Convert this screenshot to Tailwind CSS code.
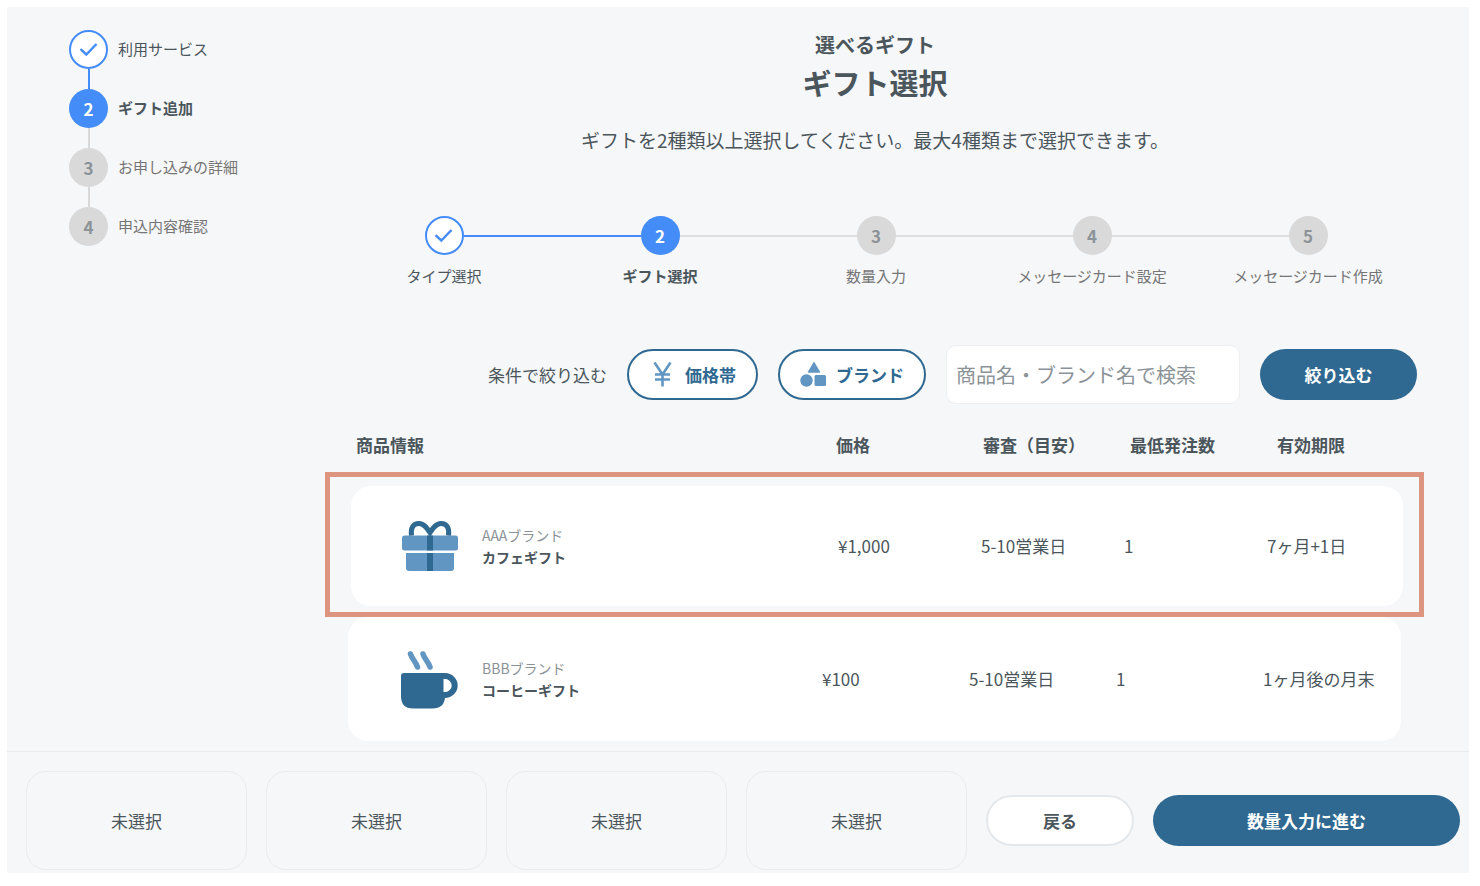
<!DOCTYPE html>
<html lang="ja">
<head>
    <meta charset="UTF-8">
    <meta name="viewport" content="width=device-width, initial-scale=1.0">
    <title>ギフト選択</title>
    <script src="https://cdn.jsdelivr.net/npm/@tailwindcss/browser@4"></script>
</head>
<body class="bg-white pt-[7px] pl-[7px] pr-[11px] pb-[13px] font-['Noto_Sans_CJK_JP',sans-serif] text-[#4b565c]">
    <div class="bg-[#f6f7f9]">
        <div class="flex">
            <!-- Application steps -->
            <nav class="w-[274px] shrink-0 pl-[62px] pt-[23px] text-[15px]">
                <ol>
                    <li>
                        <div class="flex items-center gap-[10px]">
                            <span class="size-[39px] rounded-full border-2 border-[#448cf7] bg-white flex items-center justify-center">
                                <svg class="w-5 h-5" viewBox="0 0 20 20" fill="none" stroke="#448cf7" stroke-width="2.4"><path d="M1.500 9.200 7.300 14.500 17.500 4"/></svg>
                            </span>
                            <span>利用サービス</span>
                        </div>
                        <div class="w-[2px] h-5 ml-[19px] bg-[#448cf7]"></div>
                    </li>
                    <li>
                        <div class="flex items-center gap-[10px]">
                            <span class="size-[39px] rounded-full bg-[#448cf7] text-white text-[17px] font-bold flex items-center justify-center">2</span>
                            <span class="font-bold">ギフト追加</span>
                        </div>
                        <div class="w-[2px] h-5 ml-[19px] bg-[#d9d9d9]"></div>
                    </li>
                    <li>
                        <div class="flex items-center gap-[10px]">
                            <span class="size-[39px] rounded-full bg-[#d9d9d9] text-[#8b9398] text-[17px] font-bold flex items-center justify-center">3</span>
                            <span class="text-[#757575]">お申し込みの詳細</span>
                        </div>
                        <div class="w-[2px] h-5 ml-[19px] bg-[#d9d9d9]"></div>
                    </li>
                    <li class="flex items-center gap-[10px]">
                        <span class="size-[39px] rounded-full bg-[#d9d9d9] text-[#8b9398] text-[17px] font-bold flex items-center justify-center">4</span>
                        <span class="text-[#757575]">申込内容確認</span>
                    </li>
                </ol>
            </nav>

            <main class="flex-1 pt-[22px]">
                <div class="text-center">
                    <p class="text-xl leading-8 font-bold">選べるギフト</p>
                    <h1 class="text-[29px] leading-[42px] font-bold">ギフト選択</h1>
                    <p class="mt-[21px] text-[19px] leading-8">ギフトを2種類以上選択してください。最大4種類まで選択できます。</p>
                </div>

                <!-- Gift steps -->
                <ol class="mt-[60px] pl-[55px] pr-[53px] flex text-[15px] text-[#757575]">
                    <li class="flex-1">
                        <div class="flex items-center">
                            <div class="flex-1"></div>
                            <span class="size-[39px] rounded-full border-2 border-[#448cf7] bg-white flex items-center justify-center">
                                <svg class="w-5 h-5" viewBox="0 0 20 20" fill="none" stroke="#448cf7" stroke-width="2.4"><path d="M1.500 9.200 7.300 14.500 17.500 4"/></svg>
                            </span>
                            <div class="flex-1 h-[2px] bg-[#448cf7]"></div>
                        </div>
                        <p class="mt-[9px] leading-6 text-center text-[#4b565c]">タイプ選択</p>
                    </li>
                    <li class="flex-1">
                        <div class="flex items-center">
                            <div class="flex-1 h-[2px] bg-[#448cf7]"></div>
                            <span class="size-[39px] rounded-full bg-[#448cf7] text-white text-[17px] font-bold flex items-center justify-center">2</span>
                            <div class="flex-1 h-[2px] bg-[#dddfe0]"></div>
                        </div>
                        <p class="mt-[9px] leading-6 text-center font-bold text-[#4b565c]">ギフト選択</p>
                    </li>
                    <li class="flex-1">
                        <div class="flex items-center">
                            <div class="flex-1 h-[2px] bg-[#dddfe0]"></div>
                            <span class="size-[39px] rounded-full bg-[#d9d9d9] text-[#8b9398] text-[17px] font-bold flex items-center justify-center">3</span>
                            <div class="flex-1 h-[2px] bg-[#dddfe0]"></div>
                        </div>
                        <p class="mt-[9px] leading-6 text-center">数量入力</p>
                    </li>
                    <li class="flex-1">
                        <div class="flex items-center">
                            <div class="flex-1 h-[2px] bg-[#dddfe0]"></div>
                            <span class="size-[39px] rounded-full bg-[#d9d9d9] text-[#8b9398] text-[17px] font-bold flex items-center justify-center">4</span>
                            <div class="flex-1 h-[2px] bg-[#dddfe0]"></div>
                        </div>
                        <p class="mt-[9px] leading-6 text-center">メッセージカード設定</p>
                    </li>
                    <li class="flex-1">
                        <div class="flex items-center">
                            <div class="flex-1 h-[2px] bg-[#dddfe0]"></div>
                            <span class="size-[39px] rounded-full bg-[#d9d9d9] text-[#8b9398] text-[17px] font-bold flex items-center justify-center">5</span>
                            <div class="flex-1"></div>
                        </div>
                        <p class="mt-[9px] leading-6 text-center">メッセージカード作成</p>
                    </li>
                </ol>

                <!-- Filters -->
                <form class="mt-[57px] pr-[52px] flex items-center justify-end gap-5 text-[17px]">
                    <span>条件で絞り込む</span>
                    <button type="button" class="h-[51px] pl-[22px] pr-5 flex items-center gap-[10px] rounded-full border-2 border-[#2f6991] bg-white font-bold text-[#2f6991]">
                        <svg class="w-6 h-7" viewBox="0 0 24 28" fill="none" stroke="#6296c2" stroke-width="2.6"><path d="M3.500 1.500 11.500 13.500 19.500 1.500M11.500 13V25.500M4 13.500H19M4 18.500H19"/></svg>
                        価格帯
                    </button>
                    <button type="button" class="h-[51px] px-5 flex items-center gap-[10px] rounded-full border-2 border-[#2f6991] bg-white font-bold text-[#2f6991]">
                        <svg class="w-[26px] h-7" viewBox="0 0 26 28" fill="#6296c2"><path d="M14 .5 20 10.500Q20.500 11.700 19.200 11.700H8.800Q7.500 11.700 8 10.500Z"/><circle cx="6.500" cy="19.500" r="6.200"/><rect x="14.500" y="14" width="11.500" height="11" rx="1.500"/></svg>
                        ブランド
                    </button>
                    <input type="search" aria-label="商品名・ブランド名で検索" placeholder="商品名・ブランド名で検索" class="w-[294px] h-[59px] px-[9px] rounded-[10px] border border-[#eceeef] bg-white text-xl placeholder:text-[#8b9398]">
                    <button type="submit" class="w-[157px] h-[51px] rounded-full bg-[#2f6991] font-bold text-white">絞り込む</button>
                </form>

                <!-- Gift list -->
                <table class="block ml-11 mr-[45px] mt-[25px] mb-[10px] text-[17px] text-left">
                    <thead class="block">
                        <tr class="grid grid-cols-[1fr_147px_147px_147px_147px] h-[43px] pl-[31px] leading-8">
                            <th>商品情報</th>
                            <th>価格</th>
                            <th>審査（目安）</th>
                            <th>最低発注数</th>
                            <th>有効期限</th>
                        </tr>
                    </thead>
                    <tbody class="block border-5 border-[#dd9580] pt-[9px] pb-[6px] pl-[21px] pr-4">
                        <tr class="grid grid-cols-[1fr_143px_143px_143px_136px] items-center h-30 rounded-[20px] bg-white">
                            <td class="flex items-center gap-6 pl-[51px]">
                                <svg class="w-14 h-14" viewBox="0 0 56 56">
                                    <rect x="0" y="17.500" width="56" height="15" rx="2.500" fill="#6296c2"/>
                                    <path d="M4 35H52V50Q52 53 49 53H7Q4 53 4 50Z" fill="#6296c2"/>
                                    <path d="M25 17.500H31V32.500H25ZM25 35H31V53H25Z" fill="#2f6991"/>
                                    <path d="M9.500 17.500C8.500 10 11 5.500 17 5.500C22 5.500 25 10 28 14.500C31 10 34 5.500 39 5.500C45 5.500 47.500 10 46.500 17.500" fill="none" stroke="#2f6991" stroke-width="5"/>
                                </svg>
                                <div class="text-[14px] leading-[22px]">
                                    <p class="text-[#8b9398]">AAAブランド</p>
                                    <p class="font-bold">カフェギフト</p>
                                </div>
                            </td>
                            <td>¥1,000</td>
                            <td>5-10営業日</td>
                            <td>1</td>
                            <td>7ヶ月+1日</td>
                        </tr>
                    </tbody>
                    <tbody class="block mx-[23px]">
                        <tr class="grid grid-cols-[1fr_147px_147px_147px_138px] items-center h-[124px] rounded-[20px] bg-white">
                            <td class="flex items-center gap-6 pl-[53px]">
                                <svg class="w-[57px] h-[60px]" viewBox="0 0 57 60">
                                    <path d="M9.500 5C11 10 15 13 16.500 18M22 5C23.500 10 27.500 13 29 18" fill="none" stroke="#6296c2" stroke-width="5.500" stroke-linecap="round"/>
                                    <path d="M3 24H44V47Q44 59.500 31 59.500H12Q0 59.500 0 47V27Q0 24 3 24Z" fill="#2f6991"/>
                                    <path d="M40 27H44A9.700 9.500 0 0 1 44 46H40" fill="none" stroke="#2f6991" stroke-width="6"/>
                                    <path d="M42.500 30H43.500A6 6.500 0 0 1 43.500 43H42.500Z" fill="#fff"/>
                                </svg>
                                <div class="text-[14px] leading-[22px]">
                                    <p class="text-[#8b9398]">BBBブランド</p>
                                    <p class="font-bold">コーヒーギフト</p>
                                </div>
                            </td>
                            <td>¥100</td>
                            <td>5-10営業日</td>
                            <td>1</td>
                            <td>1ヶ月後の月末</td>
                        </tr>
                    </tbody>
                </table>
            </main>
        </div>

        <!-- Selected gifts -->
        <footer class="flex items-center gap-[19px] border-t border-[#e9ebed] pt-[19px] pb-[3px] pl-[19px] pr-[9px] text-[17px]">
            <div class="flex-1 h-[99px] flex items-center justify-center rounded-[20px] border border-[#e9ebed]">未選択</div>
            <div class="flex-1 h-[99px] flex items-center justify-center rounded-[20px] border border-[#e9ebed]">未選択</div>
            <div class="flex-1 h-[99px] flex items-center justify-center rounded-[20px] border border-[#e9ebed]">未選択</div>
            <div class="flex-1 h-[99px] flex items-center justify-center rounded-[20px] border border-[#e9ebed]">未選択</div>
            <button type="button" class="w-[148px] h-[51px] rounded-full border-2 border-[#e4e8eb] bg-white font-bold">戻る</button>
            <button type="button" class="w-[307px] h-[51px] rounded-full bg-[#2f6991] font-bold text-white">数量入力に進む</button>
        </footer>
    </div>
</body>
</html>
